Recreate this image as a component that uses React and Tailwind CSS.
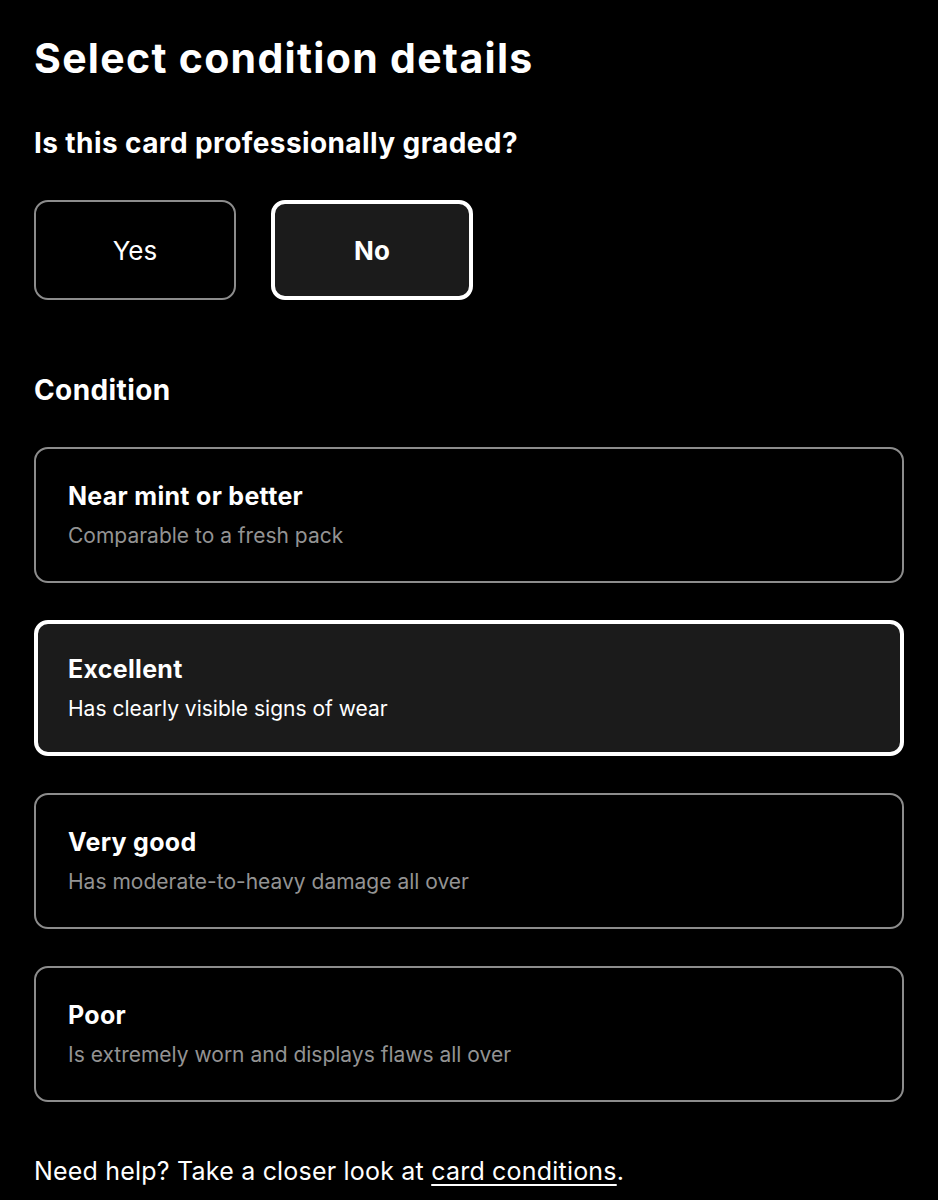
import { useState } from 'react';

const conditions = [
  { key: 'nm', title: 'Near mint or better', desc: 'Comparable to a fresh pack' },
  { key: 'ex', title: 'Excellent', desc: 'Has clearly visible signs of wear' },
  { key: 'vg', title: 'Very good', desc: 'Has moderate-to-heavy damage all over' },
  { key: 'poor', title: 'Poor', desc: 'Is extremely worn and displays flaws all over' },
];

export default function App() {
  const [graded, setGraded] = useState('no');
  const [condition, setCondition] = useState('ex');

  return (
    <div className="min-h-screen bg-black text-white px-[34px] pt-[33px] font-['Inter',sans-serif]">
      <h1 className="text-[41px] leading-[50px] font-bold tracking-[1.3px]">Select condition details</h1>

      {/* Graded */}
      <h2 className="mt-[42px] text-[28px] leading-[36px] font-bold tracking-[0.4px]">Is this card professionally graded?</h2>
      <div className="flex gap-[35px] mt-[39px]">
        {[
          { key: 'yes', label: 'Yes' },
          { key: 'no', label: 'No' },
        ].map(({ key, label }) => {
          const active = graded === key;
          return (
            <button key={key} onClick={() => setGraded(key)}
              className={`w-[202px] h-[100px] rounded-[14px] text-[26px] ${active ? 'border-[4px] border-white bg-[#1b1b1b] font-bold' : 'border-2 border-[#8c8c8c] bg-black font-normal'}`}
            >
              {label}
            </button>
          );
        })}
      </div>

      {/* Condition */}
      <h2 className="mt-[72px] text-[28px] leading-[36px] font-bold tracking-[0.4px]">Condition</h2>
      <div className="mt-[39px] flex flex-col gap-[37px]">
        {conditions.map(c => {
          const active = condition === c.key;
          return (
            <button key={c.key} onClick={() => setCondition(c.key)}
              className={`w-[870px] h-[136px] rounded-[14px] text-left flex flex-col justify-center ${active ? 'border-[4px] border-white bg-[#1b1b1b] px-[30px]' : 'border-2 border-[#8c8c8c] bg-black px-[32px]'}`}
            >
              <span className="text-[25px] leading-[32px] font-bold tracking-[0.3px]">{c.title}</span>
              <span className={`text-[21px] leading-[30px] mt-[9px] ${active ? 'text-white' : 'text-[#939393]'}`}>{c.desc}</span>
            </button>
          );
        })}
      </div>

      <p className="mt-[53px] text-[25px] leading-[32px] tracking-[0.2px]">
        Need help? Take a closer look at <a href="#" className="underline underline-offset-4 decoration-2">card conditions</a>.
      </p>
    </div>
  );
}
